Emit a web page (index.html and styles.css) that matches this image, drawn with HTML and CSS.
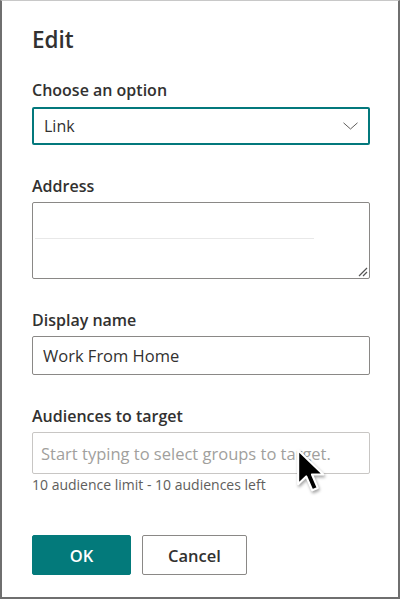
FILE: index.html
```html
<!DOCTYPE html>
<html lang="en">
<head>
<meta charset="utf-8">
<title>Edit</title>
<link rel="stylesheet" href="styles.css">
</head>
<body>
<div class="dialog">
  <h1 class="title">Edit</h1>

  <div class="label label-first">Choose an option</div>
  <div class="select">
    <span class="select-text">Link</span>
    <svg class="chevron" width="15" height="8" viewBox="0 0 15 8"><path d="M0.5 0.8 L7.5 7 L14.5 0.8" fill="none" stroke="#605e5c" stroke-width="1"/></svg>
  </div>

  <div class="label">Address</div>
  <div class="textarea">
    <div class="ghost-line"></div>
    <svg class="grip" width="10" height="10" viewBox="0 0 10 10"><path d="M1 9 L9 1 M5 9 L9 5" stroke="#555" stroke-width="1.2" fill="none"/></svg>
  </div>

  <div class="label">Display name</div>
  <div class="input">Work From Home</div>

  <div class="label">Audiences to target</div>
  <div class="input input-tall placeholder">Start typing to select groups to target.
    <svg class="cursor" width="32" height="47" viewBox="0 0 15 22"><path d="M1 1 L1 17 L4.8 13.3 L7.6 19.8 L10.2 18.7 L7.5 12.4 L12.8 12.4 Z" fill="#000" stroke="#fff" stroke-width="1" stroke-linejoin="round"/></svg>
  </div>
  <div class="helper">10 audience limit - 10 audiences left</div>

  <div class="buttons">
    <button class="btn btn-primary">OK</button>
    <button class="btn btn-default">Cancel</button>
  </div>
</div>
</body>
</html>
```

FILE: styles.css
```css
html, body {
  margin: 0;
  padding: 0;
  background: #ffffff;
}

.dialog {
  box-sizing: border-box;
  width: 400px;
  height: 599px;
  border-top: 1px solid #c8c8c8;
  border-left: 2px solid #6f6f6f;
  border-right: 2px solid #6f6f6f;
  border-bottom: 2px solid #6f6f6f;
  padding: 25px 28px 0 30px;
  font-family: "Open Sans", "Noto Sans", sans-serif;
  color: #323130;
}

.title {
  margin: 0;
  font-size: 22.5px;
  line-height: 28px;
  font-weight: 600;
  color: #323130;
}

.label {
  margin-top: 30px;
  margin-bottom: 5px;
  font-size: 16px;
  line-height: 22px;
  font-weight: 600;
  color: #323130;
}

.label-first {
  margin-top: 25px;
  margin-bottom: 6px;
}

.select {
  box-sizing: border-box;
  height: 38px;
  border: 2px solid #03787c;
  border-radius: 2px;
  padding: 0 10px;
  display: flex;
  align-items: center;
  justify-content: space-between;
  font-size: 16px;
}

.chevron {
  display: block;
}

.textarea {
  position: relative;
  box-sizing: border-box;
  height: 77px;
  border: 1px solid #8a8886;
  border-radius: 2px;
  padding-top: 35px;
}

.ghost-line {
  margin-left: 2px;
  width: 279px;
  height: 0;
  border-top: 1px solid #e8e8e8;
}

.grip {
  position: absolute;
  right: 1px;
  bottom: 1px;
}

.input {
  position: relative;
  box-sizing: border-box;
  height: 39px;
  border: 1px solid #8a8886;
  border-radius: 2px;
  padding: 0 10px;
  display: flex;
  align-items: center;
  font-size: 16.5px;
  color: #323130;
}

.input-tall {
  height: 42px;
  margin-top: 1px;
  border-color: #c8c6c4;
  padding-left: 8px;
}

.placeholder {
  color: #a19f9d;
}

.cursor {
  position: absolute;
  left: 263px;
  top: 15px;
  filter: drop-shadow(1px 2px 1.5px rgba(0, 0, 0, 0.35));
}

.helper {
  margin-top: 2px;
  font-size: 14px;
  line-height: 18px;
  color: #605e5c;
}

.buttons {
  display: flex;
  gap: 11px;
  margin-top: 41px;
}

.btn {
  box-sizing: border-box;
  height: 40px;
  border-radius: 2px;
  font-family: "Open Sans", "Noto Sans", sans-serif;
  font-size: 16.5px;
  font-weight: 600;
  padding: 0;
  cursor: pointer;
}

.btn-primary {
  width: 99px;
  background: #037a7b;
  border: 1px solid #037a7b;
  color: #ffffff;
}

.btn-default {
  width: 105px;
  background: #ffffff;
  border: 1px solid #8a8886;
  color: #323130;
}
```
